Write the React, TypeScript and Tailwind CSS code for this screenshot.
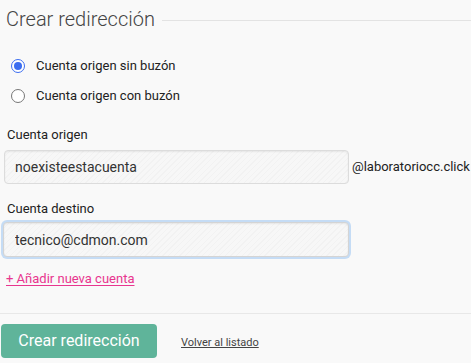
import React, { useState } from 'react';

export default function App() {
  const [tipo, setTipo] = useState<'sin' | 'con'>('sin');
  const [origen, setOrigen] = useState('noexisteestacuenta');
  const [destino, setDestino] = useState('tecnico@cdmon.com');

  const stripes =
    'bg-[repeating-linear-gradient(135deg,#f7f7f7_0px,#f7f7f7_3px,#f2f2f2_3px,#f2f2f2_4px)]';

  return (
    <div className="min-h-screen w-[471px] bg-[#f9f9f9] font-['Roboto',sans-serif] text-[#333] overflow-hidden">
      {/* Titulo */}
      <div className="flex items-center pt-[5px] pl-[6px]">
        <h1 className="text-[20px] font-light text-[#444] leading-[28px] whitespace-nowrap">Crear redirección</h1>
        <div className="flex-1 h-px bg-[#e3e3e3] ml-[7px] mt-[2px]" />
      </div>

      {/* Tipo */}
      <div className="mt-[25px] pl-[11px] flex flex-col gap-[15px]">
        {[
          { id: 'sin', label: 'Cuenta origen sin buzón' },
          { id: 'con', label: 'Cuenta origen con buzón' },
        ].map(o => (
          <label key={o.id} className="flex items-center gap-[11px] text-[13px] text-[#222] leading-[15px] cursor-pointer">
            <span
              onClick={() => setTipo(o.id as any)}
              className={`w-[14px] h-[14px] rounded-full border flex items-center justify-center bg-white ${
                tipo === o.id ? 'border-[#3b6df0]' : 'border-[#777]'
              }`}
            >
              {tipo === o.id && <span className="w-[8px] h-[8px] rounded-full bg-[#3b6df0]" />}
            </span>
            {o.label}
          </label>
        ))}
      </div>

      {/* Cuenta origen */}
      <div className="mt-[24px] pl-[7px] text-[13px] text-[#222] leading-[15px]">Cuenta origen</div>
      <div className="flex items-center mt-[8px] pl-[4px]">
        <input
          value={origen}
          onChange={e => setOrigen(e.target.value)}
          className={`w-[345px] h-[34px] shrink-0 rounded-[4px] border border-[#dcdcdc] ${stripes} shadow-[inset_0_1px_2px_rgba(0,0,0,0.07)] px-[10px] text-[14px] text-[#333] outline-none`}
        />
        <span className="ml-[3px] text-[13px] text-[#222] whitespace-nowrap">@laboratoriocc.click</span>
      </div>

      {/* Cuenta destino */}
      <div className="mt-[17px] pl-[7px] text-[13px] text-[#222] leading-[15px]">Cuenta destino</div>
      <div className="mt-[4px] pl-[1px]">
        <div className="w-[350px] p-[2px] rounded-[6px] bg-[#c5dcf5]">
          <input
            value={destino}
            onChange={e => setDestino(e.target.value)}
            className={`w-full h-[35px] rounded-[4px] border border-[#d4d4d4] ${stripes} shadow-[inset_0_1px_2px_rgba(0,0,0,0.07)] px-[11px] text-[14px] text-[#333] outline-none`}
          />
        </div>
      </div>

      {/* Anadir */}
      <div className="mt-[12px] pl-[6px] text-[13px] leading-[15px]">
        <a href="#" className="text-[#e8368f] underline underline-offset-2">+ Añadir nueva cuenta</a>
      </div>

      <div className="mt-[27px] h-px bg-[#e8e8e8]" />

      {/* Acciones */}
      <div className="flex items-center mt-[10px] pl-[1px]">
        <button className="w-[156px] h-[34px] rounded-[4px] bg-[#5fb49a] text-white text-[16px]">Crear redirección</button>
        <a href="#" className="ml-[24px] mt-[4px] text-[11px] text-[#444] underline">Volver al listado</a>
      </div>
    </div>
  );
}
